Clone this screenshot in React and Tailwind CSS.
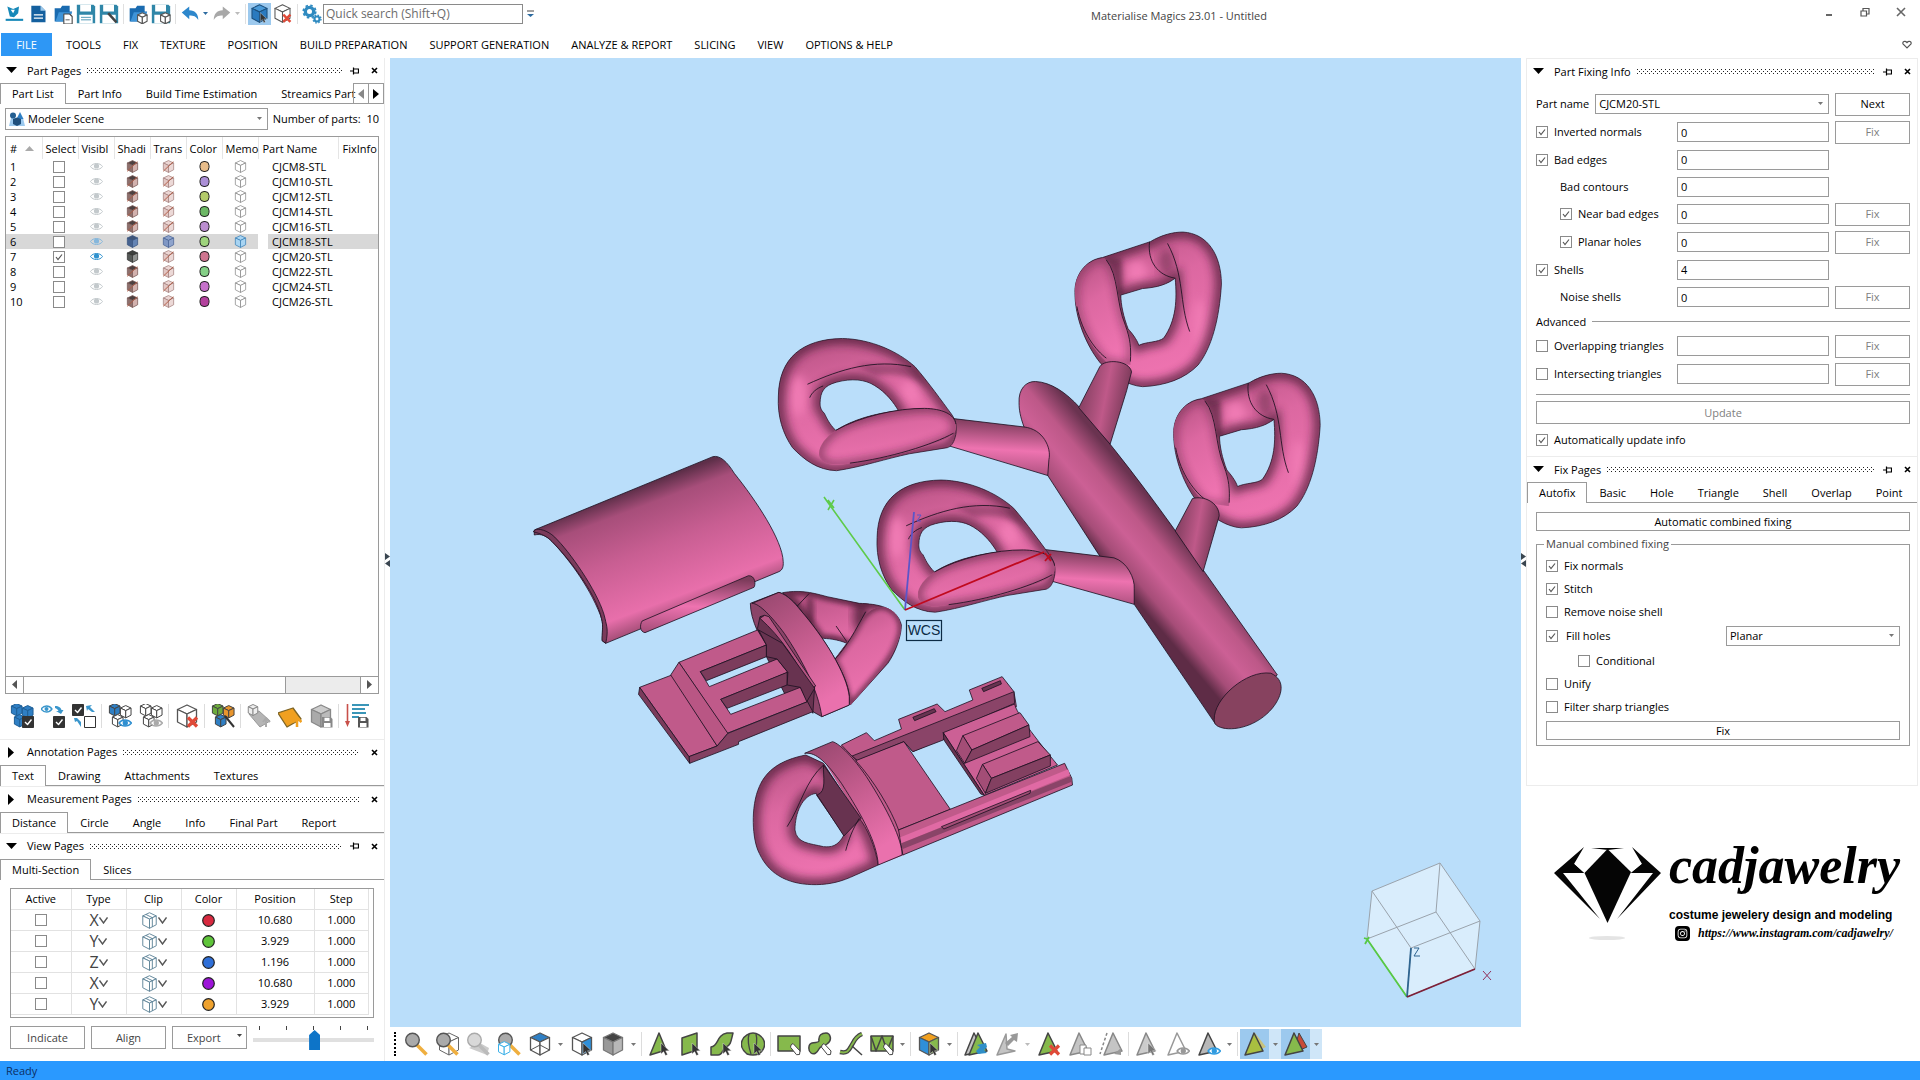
import { useId, useState } from 'react';
import { FaInstagram } from 'react-icons/fa';

const PARTS = [
  { id: 1, name: 'CJCM8-STL', color: '#e8bd8a' },
  { id: 2, name: 'CJCM10-STL', color: '#ab8fd6' },
  { id: 3, name: 'CJCM12-STL', color: '#b3cb6a' },
  { id: 4, name: 'CJCM14-STL', color: '#6cb865' },
  { id: 5, name: 'CJCM16-STL', color: '#bb8ed0' },
  { id: 6, name: 'CJCM18-STL', color: '#9ed47c', current: true },
  { id: 7, name: 'CJCM20-STL', color: '#cf7590', selected: true },
  { id: 8, name: 'CJCM22-STL', color: '#84cf86' },
  { id: 9, name: 'CJCM24-STL', color: '#c671cb' },
  { id: 10, name: 'CJCM26-STL', color: '#b3419d' },
];

const SECTIONS = [
  { axis: 'X', color: '#d8293f', position: '10.680' },
  { axis: 'Y', color: '#5fc53a', position: '3.929' },
  { axis: 'Z', color: '#2f6fd8', position: '1.196' },
  { axis: 'X', color: '#9d14d8', position: '10.680' },
  { axis: 'Y', color: '#efa22e', position: '3.929' },
];

const MENU = [
  'TOOLS',
  'FIX',
  'TEXTURE',
  'POSITION',
  'BUILD PREPARATION',
  'SUPPORT GENERATION',
  'ANALYZE & REPORT',
  'SLICING',
  'VIEW',
  'OPTIONS & HELP',
];

// ---------- small shared controls ----------

function Check({ label, defaultChecked, gap = 'gap-1.5' }) {
  return (
    <label className={`flex items-center ${gap} whitespace-nowrap`}>
      <CheckBox defaultChecked={defaultChecked} />
      {label}
    </label>
  );
}

function CheckBox({ defaultChecked, name }) {
  return (
    <span className="relative inline-block h-3 w-3 shrink-0">
      <input
        type="checkbox"
        aria-label={name}
        defaultChecked={defaultChecked}
        className="peer block h-3 w-3 appearance-none border border-[#8a8a8a] bg-white"
      />
      <svg viewBox="0 0 12 12" className="pointer-events-none absolute inset-0 hidden h-3 w-3 peer-checked:block">
        <path d="M3 6l2 2.5L9 3.5" fill="none" stroke="#555" strokeWidth="1.2" />
      </svg>
    </span>
  );
}

function Select({ id, name, options, className, inner = 'pl-1' }) {
  return (
    <div className={`relative ${className}`}>
      <select
        id={id}
        aria-label={name}
        className={`h-full w-full appearance-none border border-[#9a9a9a] bg-white ${inner}`}
      >
        {options.map((o) => (
          <option key={o}>{o}</option>
        ))}
      </select>
      <Caret className="pointer-events-none absolute top-1/2 right-1.5 -mt-0.5" />
    </div>
  );
}

function Caret({ className = '', fill = '#777' }) {
  return (
    <svg width="5" height="3" viewBox="0 0 5 3" className={className}>
      <path d="M0 0h5L2.5 3z" fill={fill} />
    </svg>
  );
}

function Button({ children, className = '', disabled }) {
  return (
    <button
      type="button"
      disabled={disabled}
      className={`border border-[#9a9a9a] bg-white text-center disabled:text-[#808080] ${className}`}
    >
      {children}
    </button>
  );
}

function PanelHeader({ title, open, pin }) {
  return (
    <div className="flex h-[25px] items-center pr-1.5 pl-1.5">
      <svg width="11" height="11" viewBox="0 0 11 11" className="mr-2.5 shrink-0">
        <path d={open ? 'M0 2h11L5.5 8z' : 'M2 0v11l6-5.5z'} fill="#000" />
      </svg>
      <h2 className="mr-1.5 whitespace-nowrap">{title}</h2>
      <div className="h-[5px] flex-1 bg-[radial-gradient(circle_at_0.5px_0.5px,#222_0.6px,transparent_0.7px),radial-gradient(circle_at_2.5px_2.5px,#222_0.6px,transparent_0.7px)] bg-[length:4px_4px]" />
      {pin && (
        <button type="button" aria-label="Pin" className="ml-2">
          <svg width="9" height="8" viewBox="0 0 9 8">
            <path d="M0 4h3M3.500 .5v7M3.500 2h5v4h-5" fill="none" stroke="#000" strokeWidth="1.200" />
          </svg>
        </button>
      )}
      <button type="button" aria-label="Close" className="ml-3">
        <svg width="7" height="7" viewBox="0 0 7 7">
          <path d="M1 1l5 5M6 1L1 6" stroke="#000" strokeWidth="1.600" />
        </svg>
      </button>
    </div>
  );
}

function Tabs({ items, children }) {
  const [active, setActive] = useState(0);
  return (
    <div className="flex h-[21px]">
      <div className="flex min-w-0 flex-1">
        {items.map((t, i) => (
          <button
            key={t}
            type="button"
            onClick={() => setActive(i)}
            className={
              i === active
                ? 'border border-b-0 border-[#9a9a9a] px-[11px] whitespace-nowrap'
                : 'border-b border-[#9a9a9a] px-3 pt-0.5 whitespace-nowrap last:pr-0'
            }
          >
            {t}
          </button>
        ))}
        <span className="min-w-0 flex-1 border-b border-[#9a9a9a]" />
      </div>
      {children}
    </div>
  );
}

// ---------- icons ----------

function Svg({ children, size = 24, className = '' }) {
  return (
    <svg width={size} height={size} viewBox="0 0 24 24" className={className} strokeLinejoin="round">
      {children}
    </svg>
  );
}

function CubeShape({ top = '#fff', left = '#fff', right = '#fff', stroke = '#555', x = 0, y = 0, s = 1, sw = 1.3 }) {
  return (
    <g transform={`translate(${x} ${y}) scale(${s})`} stroke={stroke} strokeWidth={sw / s}>
      <path d="M12 1l9.500 4.500L12 10 2.500 5.500z" fill={top} />
      <path d="M2.500 5.500L12 10v13l-9.500-5z" fill={left} />
      <path d="M21.500 5.500L12 10v13l9.500-5z" fill={right} />
    </g>
  );
}

const Cursor = ({ fill = '#333' }) => (
  <path d="M13 11v11l2.600-2.400 1.900 4 2-1-1.900-3.800h3.700z" fill={fill} stroke="#eee" strokeWidth=".4" />
);
const RedX = () => <path d="M13 13.500l9 9M22 13.500l-9 9" stroke="#e04a38" strokeWidth="3.200" fill="none" />;
const EyeMark = ({ color = '#2f8fd0' }) => (
  <g fill="none" stroke={color} strokeWidth="1.300">
    <path d="M11 19c3-4 9-4 12.500 0-3.500 4-9.500 4-12.500 0z" fill="#fff" />
    <circle cx="17.300" cy="19" r="2" fill={color} />
  </g>
);
const Disk = ({ x = 13, y = 13, s = 1, color = '#555' }) => (
  <g transform={`translate(${x} ${y}) scale(${s})`}>
    <path d="M0 0h8.500L10.500 2v8.500H0z" fill={color} />
    <path d="M2.500 .8h5v3.200h-5zM2 6h6.500v4H2z" fill="#fff" />
  </g>
);
const CheckMark = ({ x = 12, y = 12, on = true }) => (
  <g transform={`translate(${x} ${y})`}>
    <rect x=".5" y=".5" width="11" height="11" fill={on ? '#333' : '#fff'} stroke="#333" />
    {on && <path d="M3 6l2.500 2.500L9.500 3.500" stroke="#fff" strokeWidth="1.400" fill="none" />}
  </g>
);
const Lens = ({ fill = '#aaa', stroke = '#555', handle = '#efaf3f' }) => (
  <g>
    <path d="M13 13l9.500 9.500" stroke={handle} strokeWidth="3.600" />
    <circle cx="8.500" cy="8" r="6.800" fill={fill} stroke={stroke} strokeWidth="1.400" />
  </g>
);
const Tri = ({ fill = '#86b94c', stroke = '#444', x = 0 }) => (
  <path d="M11 1L2 23l18-4z" fill={fill} stroke={stroke} strokeWidth="1.500" transform={`translate(${x} 0)`} />
);
const Pencil = () => (
  <path d="M14 13l2-1.500 7 7.500-.5 3.500-3 .2-6-7.500z" fill="#fff" stroke="#444" strokeWidth="1" />
);

const TOP_ICONS = {
  logo: (
    <Svg size={20}>
      <path d="M4 3l7 3 7-3-1 8-5 5-5-1z" fill="#1688b8" />
      <path d="M8 7h5l-2 4z" fill="#fff" />
      <path d="M2 19h21" stroke="#1688b8" strokeWidth="2.500" fill="none" />
    </Svg>
  ),
  doc: (
    <Svg size={20}>
      <path d="M4 2h11l6 6v14H4z" fill="#14609f" />
      <path d="M15 2v6h6z" fill="#9cc8ea" />
      <path d="M7 13h11M7 17h11" stroke="#fff" strokeWidth="1.500" />
    </Svg>
  ),
  open: (
    <Svg size={20}>
      <path d="M2 5h7l2-3h9v7h3l-5 12H2z" fill="#1a6bb0" />
      <path d="M7 10h16l-5 11H3z" fill="#3f94d8" />
      <path d="M13 12h7l3 3v9H13z" fill="#fff" stroke="#444" strokeWidth="1.300" />
      <path d="M15 19h5" stroke="#444" />
    </Svg>
  ),
  save: (
    <Svg size={20}>
      <path d="M1 1h20l2 2v20H1z" fill="#2f86a8" />
      <path d="M5 1h13v8H5zM4 13h16v10H4z" fill="#fff" />
      <path d="M6 16h12M6 19h12" stroke="#2f86a8" />
    </Svg>
  ),
  saveAs: (
    <Svg size={20}>
      <path d="M1 1h20l2 2v20H1z" fill="#2f86a8" />
      <path d="M5 1h13v8H5zM4 13h16v10H4z" fill="#fff" />
      <path d="M11 11l10 11" stroke="#444" strokeWidth="3" />
    </Svg>
  ),
  importPart: (
    <Svg size={20}>
      <path d="M2 5h7l2-3h9v7h3l-5 12H2z" fill="#1a6bb0" />
      <path d="M7 10h16l-5 11H3z" fill="#3f94d8" />
      <CubeShape x={10} y={10} s={0.6} />
    </Svg>
  ),
  savePart: (
    <Svg size={20}>
      <path d="M1 1h20l2 2v20H1z" fill="#2f86a8" />
      <path d="M5 1h13v8H5zM4 13h16v10H4z" fill="#fff" />
      <CubeShape x={10} y={10} s={0.6} />
    </Svg>
  ),
  undo: (
    <Svg size={18}>
      <path d="M1 10l10-8v5c8 0 12 5 12 13-3-5-6-6-12-6v5z" fill="#2d87cc" />
    </Svg>
  ),
  redo: (
    <Svg size={18}>
      <path d="M23 10L13 2v5C5 7 1 12 1 20c3-5 6-6 12-6v5z" fill="#a8a8a8" />
    </Svg>
  ),
  cube: (
    <Svg size={19}>
      <CubeShape top="#4a9ad8" left="#2a7abf" right="#2a7abf" stroke="#1b4f7c" />
      <Cursor />
    </Svg>
  ),
  cubeX: (
    <Svg size={19}>
      <CubeShape />
      <RedX />
    </Svg>
  ),
  gears: (
    <Svg size={20}>
      <circle cx="9" cy="9" r="5" fill="none" stroke="#2f8ac0" strokeWidth="4" />
      <circle cx="9" cy="9" r="7.500" fill="none" stroke="#2f8ac0" strokeWidth="2" strokeDasharray="3 2.900" />
      <circle cx="18" cy="18" r="3" fill="none" stroke="#2f8ac0" strokeWidth="2.500" />
      <circle cx="18" cy="18" r="4.800" fill="none" stroke="#2f8ac0" strokeWidth="1.500" strokeDasharray="2 1.770" />
    </Svg>
  ),
};

function Three({ a, b, c, stroke = '#444' }) {
  return (
    <g>
      <CubeShape s={0.56} x={0} y={-1} top={a} left={a} right={a} stroke={stroke} sw={1} />
      <CubeShape s={0.56} x={11} y={1} top={b} left={b} right={b} stroke={stroke} sw={1} />
      <CubeShape s={0.56} x={3} y={10} top={c} left={c} right={c} stroke={stroke} sw={1} />
    </g>
  );
}

const PART_TOOLS = [
  ['Select all', <><Three a="#2f7fc4" b="#2f7fc4" c="#2f7fc4" stroke="#1f5f96" /><CheckMark /></>],
  ['Select visible', <>
    <path d="M0 5c3-4 8-4 11 0-3 4-8 4-11 0z" fill="none" stroke="#3a96cc" strokeWidth="1.300" />
    <circle cx="5.500" cy="5" r="2" fill="#3a96cc" />
    <path d="M14 2c4 0 6 2 6.500 4h2L20 10l-5-3h2.500c-.5-1.500-2-2.500-3.500-3z" fill="#3a96cc" />
    <CheckMark />
  </>],
  ['Invert selection', <>
    <CheckMark x={0} y={0} />
    <CheckMark on={false} />
    <path d="M14 2l6-1-2 2 5 5-3 0-4-3-1 2zM2 14l1 4 2-1 4 6v-5l-4-4-3 0z" fill="#3a96cc" />
  </>],
  null,
  ['Show selected', <><Three a="#2f7fc4" b="#fff" c="#fff" /><EyeMark /></>],
  ['Hide selected', <><Three a="#fff" b="#fff" c="#fff" /><EyeMark color="#aaa" /></>],
  null,
  ['Unload', <><CubeShape /><RedX /></>],
  null,
  ['Color parts', <><Three a="#6cab3c" b="#e8952d" c="#2f7fc4" /><path d="M14 12l9 11" stroke="#333" strokeWidth="2" /></>],
  null,
  ['Move to scene', <>
    <path d="M2 10l10-3 11 10-10 6z" fill="#b5b5b5" stroke="#999" />
    <CubeShape s={0.5} top="#eee" left="#eee" right="#eee" stroke="#888" sw={1} />
    <path d="M19 15v8M16 18l3-4 4 4" stroke="#aaa" strokeWidth="2" fill="none" />
  </>],
  ['Platform', <>
    <path d="M0 9l15-5 8 11-14 8z" fill="#f0a020" stroke="#7d6424" strokeWidth="1.300" />
    <path d="M19 14v9M15 18l4.500-4 4 4" stroke="#f0a020" strokeWidth="2.500" fill="none" />
  </>],
  ['Save platform', <><CubeShape top="#ccc" left="#aaa" right="#bbb" stroke="#888" /><Disk color="#888" /></>],
  null,
  ['Sort', <>
    <path d="M2.500 0v18" stroke="#c8504a" strokeWidth="1.600" />
    <path d="M0 17h5l-2.500 6z" fill="#c8504a" />
    <path d="M7 1h17M7 5h13M7 9h14M7 13h7" stroke="#3a96b8" strokeWidth="1.800" />
    <Disk />
  </>],
];

const VIEW_TOOLS = [
  ['Zoom', <Lens />],
  ['Zoom part', <><CubeShape sw={1} x={2} stroke="#666" /><Lens /></>],
  ['Unzoom', <><path d="M3 16l18 7 2-7-9-5z" fill="#ccc" /><Lens fill="#d8d8d8" stroke="#aaa" handle="#bbb" /></>],
  ['Zoom all', <><Lens /><CubeShape s={0.6} x={0} y={9} stroke="#3ab0e8" sw={1} /></>],
  ['Standard views', <>
    <CubeShape top="#2f7fc4" />
    <path d="M2.500 18l9.500-5 9.500 5" fill="none" stroke="#555" />
  </>],
  'caret',
  ['Look at plane', <><CubeShape right="#2f8fd8" /><Cursor /></>],
  ['Shading', <CubeShape top="#444" left="#999" right="#b8b8b8" stroke="#777" />],
  'caret',
  null,
  ['Mark triangle', <><path d="M11 1L2 23l16-5z" fill="#86b94c" stroke="#444" strokeWidth="1.500" /><Cursor /></>],
  ['Mark plane', <><path d="M3 6l15-5v17L3 23z" fill="#86b94c" stroke="#444" strokeWidth="1.500" /><Cursor /></>],
  ['Mark surface', <><path d="M1 15c8-1 5-12 16-14h6c-2 8-2 12-7 14-4 2-3 8-8 8H1z" fill="#86b94c" stroke="#444" strokeWidth="1.500" /><Cursor /></>],
  ['Mark shell', <><path d="M6 22C-6 12 4 1 12 1s18 11 6 21q-6 2-12 0z" fill="#86b94c" stroke="#444" strokeWidth="1.500" /><path d="M8 2c-2 7 0 14 2 20M15 2c2 7 0 14-2 20" stroke="#444" fill="none" strokeWidth="1.300" /><Cursor /></>],
  null,
  ['Rectangle mark', <><rect x="1" y="4" width="22" height="15" fill="#86b94c" stroke="#444" strokeWidth="1.500" /><Pencil /></>],
  ['Free mark', <><path d="M11 9C10 3 14 1 18 1s7 7 1 11-6 1-8 5-5 6-8 4-3-9 1-10 6 0 7-2z" fill="#86b94c" stroke="#444" strokeWidth="1.500" /><Pencil /></>],
  ['Brush mark', <><path d="M1 20c9 2 9-3 13-9 2-4 4-7 9-9" fill="none" stroke="#444" strokeWidth="4.500" /><path d="M1 20c9 2 9-3 13-9 2-4 4-7 9-9" fill="none" stroke="#86b94c" strokeWidth="2" /><path d="M13 14l10 9" stroke="#444" strokeWidth="1.500" /></>],
  ['Window mark', <><rect x="1" y="4" width="22" height="15" fill="#86b94c" stroke="#444" strokeWidth="1.500" /><path d="M1 4l5 15 6-15 5 15 6-15" fill="none" stroke="#444" strokeWidth="1.500" /><Pencil /></>],
  'caret',
  null,
  ['Mark options', <><CubeShape top="#f0a020" left="#2f8fd8" right="#86b94c" /><Cursor /></>],
  'caret',
  null,
  ['Expand marked', <><Tri fill="#c4c4c4" x={-1} /><Tri x={3} /><path d="M14 22l9-1-3-3 3-3-1-4-9 2 3 2-4 4z" fill="#2f8fc8" /></>],
  ['Shrink marked', <><path d="M11 2L2 23l18-4-8-2z" fill="#c4c4c4" stroke="#999" strokeWidth="1.500" /><path d="M23 1l-1 9-3-2-6 6-3-3 7-6-2-2z" fill="#999" /></>],
  'caretDim',
  ['Delete marked', <><Tri /><RedX /></>],
  ['Copy marked', <><Tri fill="#c4c4c4" stroke="#888" /><rect x="12" y="13" width="6" height="9" fill="#fff" stroke="#888" /><rect x="16" y="16" width="7" height="7" fill="#fff" stroke="#888" /></>],
  ['Separate marked', <><path d="M8 1L1 22" stroke="#888" strokeWidth="1.500" strokeDasharray="3 2" /><Tri fill="#c4c4c4" stroke="#888" x={3} /><path d="M15 22l7-6v7z" fill="#999" /></>],
  null,
  ['Select triangles', <><Tri fill="#ccc" stroke="#888" /><Cursor fill="#777" /></>],
  ['Hide marked', <><Tri fill="#fff" stroke="#999" /><EyeMark color="#999" /></>],
  ['Show marked', <><Tri fill="#b8b8b8" stroke="#444" /><EyeMark color="#2f9be0" /></>],
  'caret',
  null,
  ['Mark visible', <><path d="M12 1l11 14-19 8" fill="#c8c27a" /><Tri fill="#a9bf40" /></>, true],
  'caretOn',
  ['Mark through', <><path d="M15 1l8 14-14 6z" fill="#c84a38" stroke="#444" /><Tri x={-1} /></>, true],
  'caretOn',
];

function ToolIcon({ item }) {
  if (item === null) return <span className="mx-0.5 h-6 w-px shrink-0 bg-[#dcdcdc]" />;
  if (item === 'caretOn') {
    return (
      <span className="flex h-[30px] w-3 shrink-0 items-center justify-center bg-[#cfe6f8]">
        <Caret />
      </span>
    );
  }
  if (typeof item === 'string') {
    return (
      <span className="flex w-[11px] shrink-0 justify-center">
        <Caret fill={item === 'caretDim' ? '#bbb' : '#777'} />
      </span>
    );
  }
  const [name, art, on] = item;
  return (
    <button
      type="button"
      aria-label={name}
      className={
        on
          ? 'flex h-[30px] w-[29px] shrink-0 items-center justify-center bg-[#9cc9ee]'
          : 'flex w-[31px] shrink-0 items-center justify-center'
      }
    >
      <Svg>{art}</Svg>
    </button>
  );
}

// ---------- top bars ----------

function TopButton({ icon, name, on, width = 'w-[23px]' }) {
  return (
    <button
      type="button"
      aria-label={name}
      className={`flex h-[22px] ${width} shrink-0 items-center justify-center ${on ? 'bg-[#9cc9ee]' : ''}`}
    >
      {TOP_ICONS[icon]}
    </button>
  );
}

const TopSep = () => (
  <span className="flex w-1.5 shrink-0 justify-center">
    <span className="h-5 w-px bg-[#e0e0e0]" />
  </span>
);

function TitleBar() {
  return (
    <header className="flex h-[27px] shrink-0 items-center pl-0.5">
      <TopButton icon="logo" name="Magics" />
      <TopButton icon="doc" name="New" width="w-[26px]" />
      <TopButton icon="open" name="Open" />
      <TopButton icon="save" name="Save" />
      <TopButton icon="saveAs" name="Save as" />
      <TopSep />
      <TopButton icon="importPart" name="Import part" />
      <TopButton icon="savePart" name="Save part" />
      <TopSep />
      <TopButton icon="undo" name="Undo" />
      <Caret className="mx-0.5" fill="#2d6ba0" />
      <TopButton icon="redo" name="Redo" />
      <Caret className="mx-0.5" fill="#bbb" />
      <TopSep />
      <TopButton icon="cube" name="Select parts" on />
      <TopButton icon="cubeX" name="Unload part" />
      <TopSep />
      <TopButton icon="gears" name="Settings" />
      <input
        type="search"
        aria-label="Quick search"
        placeholder="Quick search (Shift+Q)"
        className="h-5 w-[200px] shrink-0 border border-[#8a8a8a] px-0.5 text-[12px] placeholder:text-[#6d6d6d]"
      />
      <svg width="7" height="8" viewBox="0 0 7 8" className="ml-1 shrink-0">
        <path d="M0 1h7" stroke="#444" />
        <path d="M0 4h7L3.500 7z" fill="#2d6ba0" />
      </svg>
      <h1 className="flex-1 pt-1 text-center text-[#444]">Materialise Magics 23.01 - Untitled</h1>
      <div className="flex shrink-0 items-center gap-[26px] pr-3.5 pb-1">
        <button type="button" aria-label="Minimize">
          <svg width="10" height="10" viewBox="0 0 10 10"><path d="M2 8h6" stroke="#666" strokeWidth="2" /></svg>
        </button>
        <button type="button" aria-label="Restore">
          <svg width="10" height="10" viewBox="0 0 10 10"><path d="M1 4h5.500v5H1zM3 4V1.500h6V7H6.500" fill="none" stroke="#555" strokeWidth="1.200" /></svg>
        </button>
        <button type="button" aria-label="Close window">
          <svg width="10" height="10" viewBox="0 0 10 10"><path d="M1 1l8 8M9 1L1 9" stroke="#666" strokeWidth="1.600" /></svg>
        </button>
      </div>
    </header>
  );
}

function MenuBar() {
  return (
    <nav className="flex h-[31px] shrink-0 items-center pt-1 pl-px">
      <a href="#file" className="mr-[3px] flex h-[23px] w-[51px] items-center justify-center bg-[#2e97f5] text-white">
        FILE
      </a>
      {MENU.map((m) => (
        <a key={m} href="#menu" className="px-[11px] whitespace-nowrap">
          {m}
        </a>
      ))}
      <svg width="10" height="9" viewBox="0 0 10 9" className="mr-2 ml-auto">
        <path d="M5 7.800L1 3.800C.3 2 2.800 0 5 2.500 7.200 0 9.700 2 9 3.800z" fill="none" stroke="#555" strokeWidth="1.200" />
      </svg>
    </nav>
  );
}

// ---------- left side ----------

function RowCube({ top, left, right, stroke, slash }) {
  return (
    <svg width="13" height="13" viewBox="0 0 24 24" className="mx-auto">
      <CubeShape top={top} left={left} right={right} stroke={stroke} sw={1.400} />
      {slash && <path d="M2 21L21 3" stroke="#b0573f" strokeWidth="1.600" />}
    </svg>
  );
}

function RowEye({ color }) {
  return (
    <svg width="13" height="9" viewBox="0 0 13 9" className="mx-auto">
      <path d="M.5 4.500C3 .5 10 .5 12.500 4.500 10 8.500 3 8.500 .5 4.500z" fill="none" stroke={color} />
      <circle cx="6.500" cy="4" r="2.600" fill={color} />
    </svg>
  );
}

function PartRow({ part }) {
  const cell = part.current ? 'bg-[#d8d8d8]' : '';
  let shade = ['#4c4040', '#8d706d', '#d3b2ae', '#7a5a57'];
  let trans = ['#ecd6d4', '#e2c6c3', '#ecd9d7', '#a58380'];
  let eye = '#c3c9cc';
  if (part.current) {
    shade = ['#3e5478', '#46628f', '#6585b5', '#3a5480'];
    trans = ['#8fa4cc', '#7f97c4', '#8fa4cc', '#4a6496'];
    eye = '#85b7dc';
  }
  if (part.selected) {
    shade = ['#3c3f3d', '#555957', '#909391', '#333'];
    eye = '#2f92cf';
  }
  return (
    <tr className="h-[15px]">
      <td className={`pl-1 ${cell}`}>{part.id}</td>
      <td className={cell}>
        <div className="flex pl-[11px]">
          <CheckBox name={`Select ${part.name}`} defaultChecked={part.selected} />
        </div>
      </td>
      <td className={cell}><RowEye color={eye} /></td>
      <td className={cell}><RowCube top={shade[0]} left={shade[1]} right={shade[2]} stroke={shade[3]} slash={!part.selected && !part.current} /></td>
      <td className={cell}><RowCube top={trans[0]} left={trans[1]} right={trans[2]} stroke={trans[3]} slash={!part.current} /></td>
      <td className={cell}>
        <svg width="11" height="11" viewBox="0 0 11 11" className="mx-auto">
          <rect x="1" y=".5" width="9" height="10" rx="4" fill={part.color} stroke="#222" />
        </svg>
      </td>
      <td className={cell}>
        {part.current ? (
          <RowCube top="#a8d4f2" left="#a8d4f2" right="#a8d4f2" stroke="#3b82b8" />
        ) : (
          <RowCube stroke="#8a8a8a" />
        )}
      </td>
      <td className="pl-2.5">
        <div className={`pl-1 ${part.current ? 'bg-[#d8d8d8]' : ''}`}>{part.name}</div>
      </td>
      <td className={cell} />
    </tr>
  );
}

const PART_COLUMNS = ['Select', 'Visibl', 'Shadi', 'Trans', 'Color', 'Memo'];

function PartList() {
  return (
    <div className="mx-[5px] mt-1.5 flex min-h-0 flex-1 flex-col border border-[#9a9a9a]">
      <div className="min-h-0 flex-1">
        <table className="w-full table-fixed border-collapse leading-[15px]">
          <colgroup>
            <col className="w-9" />
            <col className="w-9" />
            <col className="w-9" />
            <col className="w-9" />
            <col className="w-9" />
            <col className="w-9" />
            <col className="w-9" />
            <col className="w-20" />
            <col />
          </colgroup>
          <thead>
            <tr className="h-[22px] text-left">
              <th className="border-r border-[#e5e5e5] pl-1 font-normal">
                <span className="flex items-center gap-2">
                  #
                  <svg width="9" height="5" viewBox="0 0 9 5"><path d="M0 5h9L4.500 0z" fill="#aaa" /></svg>
                </span>
              </th>
              {PART_COLUMNS.map((c) => (
                <th key={c} className="border-r border-[#e5e5e5] pl-[3px] font-normal whitespace-nowrap">
                  {c}
                </th>
              ))}
              <th className="border-r border-[#e5e5e5] pl-1 font-normal">Part Name</th>
              <th className="pl-1 font-normal whitespace-nowrap">FixInfo</th>
            </tr>
          </thead>
          <tbody>
            {PARTS.map((p) => (
              <PartRow key={p.id} part={p} />
            ))}
          </tbody>
        </table>
      </div>
      <div className="flex h-[17px] shrink-0 border-t border-[#9a9a9a] bg-[#ececec]">
        <button type="button" aria-label="Scroll left" className="flex w-[18px] items-center justify-center border-r border-[#9a9a9a] bg-white">
          <svg width="5" height="9" viewBox="0 0 5 9"><path d="M5 0v9L0 4.500z" fill="#555" /></svg>
        </button>
        <div className="flex-1">
          <div className="h-full w-[78%] border-r border-[#9a9a9a] bg-white" />
        </div>
        <button type="button" aria-label="Scroll right" className="flex w-[18px] items-center justify-center border-l border-[#9a9a9a] bg-white">
          <svg width="5" height="9" viewBox="0 0 5 9"><path d="M0 0v9l5-4.500z" fill="#555" /></svg>
        </button>
      </div>
    </div>
  );
}

function MultiSection() {
  const line = 'border-r border-b border-[#e2e2e2]';
  return (
    <>
      <div className="mx-2.5 mt-2 border border-[#9a9a9a] pr-1 pb-0.5">
        <table className="w-full table-fixed border-collapse text-center">
          <colgroup>
            <col className="w-[60px]" />
            <col className="w-[55px]" />
            <col className="w-[55px]" />
            <col className="w-[55px]" />
            <col className="w-[78px]" />
            <col />
          </colgroup>
          <thead>
            <tr className="h-[21px]">
              {['Active', 'Type', 'Clip', 'Color', 'Position', 'Step'].map((h) => (
                <th key={h} className={`font-normal ${line}`}>{h}</th>
              ))}
            </tr>
          </thead>
          <tbody>
            {SECTIONS.map((s, i) => (
              <tr key={i} className="h-[21px]">
                <td className={line}>
                  <div className="flex justify-center"><CheckBox name={`Active ${i + 1}`} /></div>
                </td>
                <td className={line}>
                  <div className="flex h-5 items-center justify-center text-base leading-5 text-[#444]">
                    {s.axis}
                    <Chevron />
                  </div>
                </td>
                <td className={line}>
                  <div className="flex items-center justify-center">
                    <svg width="17" height="17" viewBox="0 0 24 24">
                      <CubeShape stroke="#5b8296" sw={1.300} />
                      <path d="M7 3.500l9 4.500v13" fill="none" stroke="#5b8296" strokeWidth="1.300" />
                    </svg>
                    <Chevron />
                  </div>
                </td>
                <td className={line}>
                  <svg width="13" height="13" viewBox="0 0 13 13" className="mx-auto">
                    <circle cx="6.500" cy="6.500" r="5.800" fill={s.color} stroke="#222" strokeWidth="1.200" />
                  </svg>
                </td>
                <td className={line}>{s.position}</td>
                <td className={line}>1.000</td>
              </tr>
            ))}
          </tbody>
        </table>
      </div>
      <div className="mx-2.5 mt-2 mb-[11px] flex items-start gap-1.5 text-[#444]">
        <Button className="h-[23px] w-[75px]">Indicate</Button>
        <Button className="h-[23px] w-[75px]">Align</Button>
        <Button className="flex h-[23px] w-[75px] items-center justify-between pr-1 pl-3.5">
          Export
          <Caret fill="#444" className="mb-1" />
        </Button>
        <div className="flex-1">
          <div className="flex h-1 justify-between px-1.5">
            {[0, 1, 2, 3, 4].map((t) => (
              <span key={t} className="h-1 w-px bg-[#444]" />
            ))}
          </div>
          <input
            type="range"
            aria-label="Section position"
            defaultValue="51"
            className="block h-5 w-full appearance-none bg-transparent [&::-webkit-slider-runnable-track]:h-1 [&::-webkit-slider-runnable-track]:bg-[#e0e0e0] [&::-webkit-slider-thumb]:-mt-2 [&::-webkit-slider-thumb]:h-5 [&::-webkit-slider-thumb]:w-[11px] [&::-webkit-slider-thumb]:appearance-none [&::-webkit-slider-thumb]:bg-[#0d74c8] [&::-webkit-slider-thumb]:[clip-path:polygon(50%_0,100%_25%,100%_100%,0_100%,0_25%)]"
          />
        </div>
      </div>
    </>
  );
}

function Chevron() {
  return (
    <svg width="9" height="7" viewBox="0 0 9 7">
      <path d="M.5 .5l4 5.500 4-5.500" fill="none" stroke="#555" strokeWidth="1.400" />
    </svg>
  );
}

function LeftPanel() {
  return (
    <aside className="flex w-[385px] shrink-0 flex-col border-r border-[#ececec]">
      <PanelHeader title="Part Pages" open pin />
      <Tabs items={['Part List', 'Part Info', 'Build Time Estimation', 'Streamics Part']}>
        <div className="flex shrink-0">
          <button type="button" aria-label="Previous tabs" className="flex w-4 items-center justify-center border border-[#9a9a9a]">
            <svg width="6" height="10" viewBox="0 0 6 10"><path d="M6 0v10L0 5z" fill="#888" /></svg>
          </button>
          <button type="button" aria-label="Next tabs" className="flex w-[15px] items-center justify-center border border-l-0 border-[#9a9a9a]">
            <svg width="6" height="10" viewBox="0 0 6 10"><path d="M0 0v10l6-5z" fill="#000" /></svg>
          </button>
        </div>
      </Tabs>
      <div className="mx-[5px] mt-1 flex items-center justify-between">
        <div className="relative">
          <Select name="Scene" options={['Modeler Scene']} className="h-[22px] w-[263px]" inner="pl-[22px]" />
          <svg width="16" height="14" viewBox="0 0 16 14" className="pointer-events-none absolute top-1 left-1">
            <path d="M2 6l-2 8h16l-2-8z" fill="#9cc9ee" />
            <circle cx="4" cy="3.500" r="3" fill="#245f92" />
            <path d="M11 0l3.500 7h-7z" fill="#2f7fc4" />
            <path d="M4 7l4-1.500L12 7v5l-4 2-4-2z" fill="#1f4f7c" />
          </svg>
        </div>
        <p className="whitespace-pre">Number of parts:  10</p>
      </div>
      <PartList />
      <div className="flex h-[45px] shrink-0 items-center pl-1.5">
        {PART_TOOLS.map((t, i) => (
          <ToolIcon key={i} item={t} />
        ))}
      </div>
      <section className="h-[47px] shrink-0 border-t border-[#ececec]">
        <PanelHeader title="Annotation Pages" />
        <Tabs items={['Text', 'Drawing', 'Attachments', 'Textures']} />
      </section>
      <section className="h-[47px] shrink-0 border-t border-[#ececec]">
        <PanelHeader title="Measurement Pages" />
        <Tabs items={['Distance', 'Circle', 'Angle', 'Info', 'Final Part', 'Report']} />
      </section>
      <section className="shrink-0 border-t border-[#ececec]">
        <PanelHeader title="View Pages" open pin />
        <Tabs items={['Multi-Section', 'Slices']} />
        <MultiSection />
      </section>
    </aside>
  );
}

// ---------- 3D scene ----------

const EDGE = '#4a1f36';
const INK = '#1c1020';

// filled outline with soft darkening along its rim, like a lit tube
function Solid({ d, fill = 'url(#pink)', rim = 34, blur = 'soft', ink = true, children }) {
  const id = useId();
  return (
    <g>
      <clipPath id={id}>
        <path d={d} clipRule="evenodd" />
      </clipPath>
      <path d={d} fill={fill} fillRule="evenodd" />
      <g clipPath={`url(#${id})`}>
        {children}
        <path d={d} fill="none" stroke={EDGE} strokeWidth={rim} filter={`url(#${blur})`} opacity=".7" />
      </g>
      {ink && <path d={d} fill="none" stroke={INK} strokeWidth="1" vectorEffect="non-scaling-stroke" opacity=".7" />}
    </g>
  );
}

function Flat({ d, fill = '#c05a8a' }) {
  return <path d={d} fill={fill} stroke={INK} strokeWidth="1" strokeOpacity=".8" vectorEffect="non-scaling-stroke" strokeLinejoin="round" />;
}

function Lines({ d }) {
  return <path d={d} fill="none" stroke={INK} strokeWidth="1" strokeOpacity=".85" vectorEffect="non-scaling-stroke" />;
}

function LoopLeft() {
  return (
    <g>
      <Solid d="M48 540C50 430 110 375 215 373C290 375 360 410 405 455C440 500 475 555 500 592C515 615 515 640 510 660C505 680 498 687 490 690L390 708C330 722 270 745 200 757C150 755 115 725 85 690C60 650 45 600 48 540ZM157 560C158 530 165 510 200 500C240 488 275 492 300 510C330 530 350 560 362 583C300 590 240 610 198 640C180 620 175 605 168 590C158 580 157 570 157 560Z">
        <ellipse cx="395" cy="530" rx="28" ry="36" fill="#f07ab4" filter="url(#soft)" />
        <ellipse cx="100" cy="540" rx="22" ry="60" fill="#f07ab4" filter="url(#soft)" />
        <path d="M250 450Q330 440 410 460L440 520Q400 470 300 480z" fill={EDGE} opacity=".35" filter="url(#tight)" />
      </Solid>
      <Solid
        d="M155 715C150 690 170 660 198 640C260 600 360 575 430 576C475 577 508 592 512 622C514 645 505 658 480 668C410 700 320 722 235 735C200 742 165 745 155 715Z"
        rim={16}
        ink={false}
      />
      <Lines d="M198 640C260 600 360 575 430 576C475 577 508 592 512 622M235 735C340 720 450 682 506 648M124 506C210 462 300 432 395 455M130 545C135 530 148 518 165 511" />
    </g>
  );
}

function LoopRight() {
  return (
    <g>
      <Solid d="M823 240C822 190 850 145 895 138L1020 92C1050 72 1080 64 1105 64C1170 68 1205 130 1206 215C1200 320 1180 400 1145 450C1110 490 1060 510 1000 513C960 510 920 480 890 445C850 390 823 310 823 240ZM943 247L1000 228C1040 225 1065 215 1085 198C1090 260 1088 320 1055 372C1040 385 1010 382 990 393C985 375 970 355 962 345C950 310 943 275 943 247Z">
        <ellipse cx="985" cy="180" rx="28" ry="34" fill="#f07ab4" filter="url(#soft)" />
        <ellipse cx="1062" cy="150" rx="20" ry="40" fill={EDGE} filter="url(#soft)" opacity=".45" />
        <path d="M905 140L945 140L950 250L930 250z" fill={EDGE} filter="url(#tight)" opacity=".6" />
        <ellipse cx="1150" cy="330" rx="18" ry="70" fill="#f07ab4" filter="url(#soft)" />
      </Solid>
      <Solid
        d="M823 240C822 190 850 145 900 140C940 180 930 260 955 335C972 380 970 410 968 450L905 440C860 395 823 310 823 240Z"
        rim={12}
        ink={false}
      />
      <Lines d="M905 145C938 190 930 270 955 335C968 375 970 400 968 440M1018 92C1012 150 1040 190 1085 198M1065 97C1110 190 1095 270 1123 353M828 280C842 360 880 410 905 430" />
    </g>
  );
}

function Scene() {
  return (
    <svg viewBox="390 58 1131 969" preserveAspectRatio="xMidYMid slice" className="block h-full w-full bg-[#badefa]">
      <defs>
        <filter id="soft" x="-30%" y="-30%" width="160%" height="160%">
          <feGaussianBlur stdDeviation="13" />
        </filter>
        <filter id="tight" x="-30%" y="-30%" width="160%" height="160%">
          <feGaussianBlur stdDeviation="7" />
        </filter>
        <linearGradient id="pink" x1="0" y1="0" x2=".35" y2="1">
          <stop offset="0" stopColor="#b35080" />
          <stop offset=".45" stopColor="#dc68a1" />
          <stop offset="1" stopColor="#ee73b0" />
        </linearGradient>
        <linearGradient id="trunk" gradientUnits="userSpaceOnUse" x1="870" y1="985" x2="1035" y2="860">
          <stop offset="0" stopColor="#5e2c46" />
          <stop offset=".18" stopColor="#a64d78" />
          <stop offset=".45" stopColor="#cc6095" />
          <stop offset=".7" stopColor="#bd5888" />
          <stop offset="1" stopColor="#6a3350" />
        </linearGradient>
        <linearGradient id="stem" x1=".1" y1="0" x2="0" y2="1">
          <stop offset="0" stopColor="#7e3c5c" />
          <stop offset=".5" stopColor="#ee73b0" />
          <stop offset="1" stopColor="#a34c77" />
        </linearGradient>
        <linearGradient id="stemDark" x1="0" y1=".3" x2="1" y2=".6">
          <stop offset=".1" stopColor="#8a4265" />
          <stop offset=".5" stopColor="#bf5989" />
          <stop offset=".9" stopColor="#7a3a59" />
        </linearGradient>
        <linearGradient id="plate" gradientUnits="userSpaceOnUse" x1="300" y1="185" x2="450" y2="560">
          <stop offset="0" stopColor="#5e2f49" />
          <stop offset=".14" stopColor="#a74e7a" />
          <stop offset=".45" stopColor="#c85e92" />
          <stop offset=".85" stopColor="#e86fab" />
          <stop offset="1" stopColor="#a04c74" />
        </linearGradient>
        <linearGradient id="band" x1="0" y1="0" x2=".5" y2="1">
          <stop offset="0" stopColor="#94466c" />
          <stop offset=".5" stopColor="#c25b8c" />
          <stop offset="1" stopColor="#ea71ad" />
        </linearGradient>
      </defs>

      {/* tree with four loops */}
      <g transform="translate(760 210) scale(.38265 .34439)">
        <Flat d="M677 560C675 520 695 497 720 498C760 500 800 530 835 573C960 735 1060 890 1158 1045L1352 1350L1190 1492L978 1145L885 1000L752 771L690 630C680 600 677 580 677 560Z" fill="url(#trunk)" />
        <Flat d="M1187 1480C1185 1420 1270 1335 1335 1345C1375 1365 1365 1410 1340 1445C1300 1500 1235 1515 1203 1502C1190 1497 1187 1490 1187 1480Z" fill="#87425f" />
        <Flat d="M500 605L690 630C740 636 762 690 755 725L752 771L485 682Z" fill="url(#stem)" />
        <Flat d="M745 986L925 1010C960 1022 980 1070 978 1100L978 1145L760 1077Z" fill="url(#stem)" />
        <LoopLeft />
        <g transform="translate(258 411)">
          <LoopLeft />
        </g>
        <LoopRight />
        <g transform="translate(258 410)">
          <LoopRight />
        </g>
        <Flat d="M888 455C900 432 965 435 971 470L958 525L915 680L833 574Z" fill="url(#stemDark)" />
        <Flat d="M1130 838C1160 828 1200 850 1200 888L1158 1050L1085 932Z" fill="url(#stemDark)" />
      </g>

      {/* cover plate and both clasp halves */}
      <g transform="translate(520 430) scale(.35714 .33333)">
        <Flat d="M40 300L540 80C560 75 580 95 600 130C660 210 735 330 737 395C738 410 735 420 725 425L240 640L230 632C232 600 235 585 225 555C190 460 130 380 90 335C75 318 60 310 40 315Z" fill="url(#plate)" />
        <Flat d="M37 305C60 312 75 318 90 335C150 400 215 500 228 565C235 590 228 610 230 632L240 640C248 600 243 590 238 565C225 500 150 380 105 330C85 305 60 296 45 298Z" fill="#7a3b5b" />
        <Flat d="M342 573L640 437C660 437 660 465 655 472L350 608C335 605 335 585 342 573Z" fill="url(#stem)" />

        <Solid d="M735 488C780 480 810 485 860 500L950 520C1000 522 1055 530 1068 585C1068 620 1050 670 1030 700L925 825L880 690L915 640C890 628 860 625 843 625L775 525Z" rim={26} blur="tight">
          <ellipse cx="955" cy="560" rx="22" ry="50" fill={EDGE} filter="url(#soft)" opacity=".8" />
          <ellipse cx="812" cy="545" rx="12" ry="45" fill={EDGE} filter="url(#tight)" opacity=".6" />
        </Solid>
        <Solid d="M945 590C965 545 1000 520 1030 535C1060 550 1070 580 1065 610C1050 670 1030 700 925 825C915 780 895 710 880 690C900 660 925 630 945 590Z" rim={16} blur="tight" ink={false} />
        <Lines d="M968 545C940 600 915 650 880 690M775 530L810 490M885 588L915 635" />
        <Flat d="M645 520L725 487C750 495 770 520 785 540C850 620 920 740 922 800L922 825L845 860L820 845C760 760 645 620 645 520Z" fill="#8a4468" />
        <Flat d="M650 520L725 487C750 495 770 520 785 540C850 620 915 730 922 800L922 825L845 860C835 780 790 690 740 610C705 560 670 520 650 520Z" fill="url(#band)" />
        <Flat d="M665 595L672 560L685 556L825 770L820 850L803 815L745 800L690 680Z" fill="#683350" />
        <Flat d="M685 556L697 560L828 768L812 778C780 700 730 620 672 565Z" fill="#b55583" />
        <Flat d="M445 697L665 600L690 645L505 725L530 770L720 687L750 727L562 808L590 853L785 772L805 815L580 910Z" />
        <Flat d="M505 725L690 645L690 680L522 752Z" fill="#7c3c5c" />
        <Flat d="M562 808L748 727L748 765L580 835Z" fill="#7c3c5c" />
        <Flat d="M690 645L690 680L720 687L750 727L748 765L785 772L803 815L825 775L735 640L668 600Z" fill="#683350" />
        <Flat d="M335 772L425 735L552 948L473 980Z" />
        <Flat d="M445 697L582 910L552 948L422 735Z" fill="#b95684" />
        <Flat d="M582 910L805 815L820 845L612 935L612 943L475 1000L473 980L552 948Z" fill="#834061" />
        <Flat d="M335 772L473 980L475 1000L332 793Z" fill="#7a3b5b" />

        <path d="M855 1000L900 945L965 985L1075 1180L1075 1275L1003 1305L950 1165Z" fill="#c05a8a" />
        <Flat d="M900 945L970 908L992 932L1068 897L1060 868L1168 822L1190 845L1268 810L1258 780L1350 740L1383 785L1390 830L1185 925L1100 965L1075 935L940 990Z" />
        <Flat d="M930 978L1383 785L1385 820L1200 905L1185 930L1100 965L1075 935L945 992Z" fill="#8a4468" />
        <Flat d="M1100 862L1160 836L1165 845L1105 872ZM1293 775L1345 752L1348 762L1298 785Z" fill="#683350" />
        <Flat d="M940 992L1075 935L1205 1138L1060 1200C1040 1140 990 1050 940 992Z" />
        <Flat d="M1185 908L1385 822C1390 850 1440 920 1505 1005L1300 1096Z" fill="#cc6095" />
        <Flat d="M1185 908L1300 1096L1290 1092L1187 930Z" fill="#683350" />
        <Flat d="M1240 917L1400 848L1425 885L1265 960Z" />
        <Flat d="M1240 917L1265 960L1245 1000L1222 962Z" fill="#a34d76" />
        <Flat d="M1265 960L1425 885L1428 920L1245 1000Z" fill="#834061" />
        <Flat d="M1295 1003L1450 935L1485 975L1320 1045Z" />
        <Flat d="M1295 1003L1320 1045L1303 1090L1278 1045Z" fill="#a34d76" />
        <Flat d="M1320 1045L1485 975L1485 1008L1303 1090Z" fill="#834061" />
        <Flat d="M1060 1200L1525 1000L1545 1045L1547 1065L1072 1275Z" />
        <path d="M1065 1222L1535 1018L1540 1035L1068 1240Z" fill="#e06aa4" />
        <path d="M1068 1240L1542 1038L1545 1055L1070 1258Z" fill="#8a4468" />
        <Flat d="M1180 1190L1430 1081L1428 1090L1187 1197Z" fill="#a34d76" />

        <Solid d="M800 975C730 990 690 1020 670 1070C645 1130 650 1230 670 1270C700 1340 760 1365 830 1364C870 1363 900 1355 940 1335L1003 1305C995 1250 970 1190 950 1165L850 1000ZM830 1095L907 1215C890 1250 870 1252 850 1250C810 1240 775 1240 770 1200C770 1150 790 1095 830 1090Z" rim={38} />
        <Flat d="M850 1005L955 1165L907 1218L832 1095C860 1085 848 1040 850 1005Z" fill="#683350" />
        <Lines d="M850 1005C800 1050 785 1130 748 1190M950 1165C930 1200 920 1230 912 1262" />
        <Flat d="M797 970L875 935C895 940 935 985 970 1040C1030 1140 1070 1230 1070 1275L1003 1305C1000 1240 960 1160 900 1060C860 1000 830 965 797 970Z" fill="url(#band)" />
      </g>

      {/* work coordinate system */}
      <g fill="none">
        <path d="M905 610L824 497M828 500l6 8M834 500l-6 10" stroke="#5ecb4a" strokeWidth="1.600" />
        <path d="M905 610L914 512" stroke="#5b55c8" strokeWidth="1.800" />
        <path d="M905 610L1044 552M1045 553l6 8M1051 554l-6 7" stroke="#c00a1e" strokeWidth="1.800" />
        <path d="M917 515h4l-4 6h4" stroke="#5b55c8" />
        <rect x="906.500" y="620.500" width="35" height="20" fill="#badefa" stroke="#0c2a44" strokeWidth="1.200" />
      </g>
      <text x="924" y="635" textAnchor="middle" fontFamily="Liberation Sans" fontSize="14" fill="#0c2a44">WCS</text>

      {/* orientation cube */}
      <g stroke="#9aa3ac" fill="none">
        <path d="M1372 891L1440 863L1480 921L1475 969L1407 997L1367 939Z" fill="#fff" fillOpacity=".45" />
        <path d="M1372 891L1411 948L1480 921M1411 948L1407 997M1440 863L1436 912L1367 939M1436 912L1475 969" />
        <path d="M1407 997L1367 939l-3-1m1 6l4-7" stroke="#57c944" strokeWidth="1.800" />
        <path d="M1407 997L1411 948" stroke="#2f6590" strokeWidth="1.800" />
        <path d="M1407 997L1475 969" stroke="#7d2038" strokeWidth="1.800" />
        <path d="M1414 948h5l-5 8h6" stroke="#2f6590" />
        <path d="M1483 971l8 9M1491 971l-8 9" stroke="#93305a" />
      </g>
    </svg>
  );
}

// ---------- right side ----------

function FixRow({ label, value = '', checkable, defaultChecked, indent, fix, h = 'h-7' }) {
  const id = useId();
  return (
    <div className={`flex items-center gap-1.5 ${h}`}>
      <div className={`min-w-0 flex-1 ${indent ? 'pl-6' : ''}`}>
        {checkable ? <Check label={label} defaultChecked={defaultChecked} /> : <label htmlFor={id}>{label}</label>}
      </div>
      <input
        id={id}
        aria-label={label}
        defaultValue={value}
        className="h-5 w-[152px] border border-[#9a9a9a] px-[3px]"
      />
      {fix ? (
        <Button disabled className="h-[23px] w-[75px]">Fix</Button>
      ) : (
        <span className="w-[75px]" />
      )}
    </div>
  );
}

function FixingInfo() {
  return (
    <section className="h-[399px] border border-[#ececec]">
      <PanelHeader title="Part Fixing Info" open pin />
      <div className="pt-1.5 pr-[7px] pl-[9px]">
        <div className="flex h-7 items-center gap-1.5">
          <label htmlFor="part-name" className="whitespace-nowrap">Part name</label>
          <Select id="part-name" options={['CJCM20-STL']} className="h-5 flex-1" inner="pl-[3px]" />
          <Button className="h-[23px] w-[75px]">Next</Button>
        </div>
        <FixRow label="Inverted normals" value="0" checkable defaultChecked fix />
        <FixRow label="Bad edges" value="0" checkable defaultChecked h="h-[27px]" />
        <FixRow label="Bad contours" value="0" indent h="h-[27px]" />
        <FixRow label="Near bad edges" value="0" checkable defaultChecked indent fix />
        <FixRow label="Planar holes" value="0" checkable defaultChecked indent fix />
        <FixRow label="Shells" value="4" checkable defaultChecked h="h-[27px]" />
        <FixRow label="Noise shells" value="0" indent fix />
        <div className="flex h-[21px] items-center gap-1.5">
          Advanced
          <hr className="flex-1 border-[#9a9a9a]" />
        </div>
        <FixRow label="Overlapping triangles" checkable fix />
        <FixRow label="Intersecting triangles" checkable fix />
        <hr className="my-1.5 border-[#9a9a9a]" />
        <Button disabled className="h-[23px] w-full">Update</Button>
        <div className="mt-2">
          <Check label="Automatically update info" defaultChecked />
        </div>
      </div>
    </section>
  );
}

function FixPages() {
  return (
    <section className="h-[329px] border border-t-0 border-[#ececec]">
      <PanelHeader title="Fix Pages" open pin />
      <Tabs items={['Autofix', 'Basic', 'Hole', 'Triangle', 'Shell', 'Overlap', 'Point']} />
      <div className="pt-[9px] pr-[7px] pl-[9px]">
        <Button className="h-[19px] w-full leading-4">Automatic combined fixing</Button>
        <fieldset className="mt-[5px] border border-[#9a9a9a] px-[9px] pt-0.5 pb-[5px]">
          <legend className="-ml-0.5 px-0.5 text-[#444]">Manual combined fixing</legend>
          <div className="flex h-[23px] items-center"><Check label="Fix normals" defaultChecked /></div>
          <div className="flex h-[23px] items-center"><Check label="Stitch" defaultChecked /></div>
          <div className="flex h-[23px] items-center"><Check label="Remove noise shell" /></div>
          <div className="flex h-[26px] items-center justify-between">
            <Check label="Fill holes" defaultChecked gap="gap-2" />
            <Select name="Fill type" options={['Planar']} className="h-5 w-[174px]" inner="pl-[3px]" />
          </div>
          <div className="flex h-[23px] items-center pl-8"><Check label="Conditional" /></div>
          <div className="flex h-[23px] items-center"><Check label="Unify" /></div>
          <div className="flex h-[23px] items-center"><Check label="Filter sharp triangles" /></div>
          <Button className="mt-[3px] h-[19px] w-full leading-4">Fix</Button>
        </fieldset>
      </div>
    </section>
  );
}

function Brand() {
  return (
    <div className="mt-[46px] ml-7 flex items-start gap-2">
      <svg width="107" height="100" viewBox="0 0 107 100" className="mt-3 shrink-0">
        <path d="M53.500 5L77 28 53.500 79 30.500 29z" fill="#050505" />
        <path d="M37 4h33l-16 2z" fill="#050505" />
        <path d="M30 3L0 29l46 46L9 29h21L20 20z" fill="#050505" />
        <path d="M78 3l29 26-44 46 36-46H77l11-9z" fill="#050505" />
        <path d="M20 20l10 9H8z" fill="#050505" />
        <path d="M88 20l-11 9h22z" fill="#050505" />
        <ellipse cx="53" cy="94" rx="18" ry="2" fill="#e4e4e4" />
      </svg>
      <div className="text-black">
        <p className="font-['Liberation_Serif',serif] text-[52px] leading-[68px] font-bold italic">cadjawelry</p>
        <p className="mt-1.5 font-['Liberation_Sans',sans-serif] text-[12px] leading-[18px] font-bold whitespace-nowrap">
          costume jewelery design and modeling
        </p>
        <p className="flex items-center gap-2 pt-px pl-1.5 leading-4">
          <span className="flex h-[15px] w-[15px] items-center justify-center rounded bg-black text-white">
            <FaInstagram size={11} />
          </span>
          <a href="#instagram" className="font-['Liberation_Serif',serif] text-[12px] font-bold italic">
            https://www.instagram.com/cadjawelry/
          </a>
        </p>
      </div>
    </div>
  );
}

function Splitter({ className = '' }) {
  return (
    <div className={`flex w-[5px] shrink-0 items-center justify-center ${className}`}>
      <svg width="5" height="14" viewBox="0 0 5 14">
        <path d="M0 0l5 3.500L0 7zM5 7v7L0 10.500z" fill="#3a4650" />
      </svg>
    </div>
  );
}

export default function App() {
  return (
    <div className="flex h-screen flex-col overflow-hidden bg-white font-['Open_Sans','Noto_Sans',sans-serif] text-[11px] leading-4 text-black">
      <TitleBar />
      <MenuBar />
      <div className="flex min-h-0 flex-1">
        <LeftPanel />
        <Splitter />
        <div className="flex min-w-0 flex-1 flex-col">
          <div className="flex min-h-0 flex-1">
            <main className="min-w-0 flex-1">
              <Scene />
            </main>
            <Splitter className="pt-[34px]" />
            <aside className="w-[394px] shrink-0 pr-0.5">
              <FixingInfo />
              <FixPages />
              <Brand />
            </aside>
          </div>
          <div className="flex h-[34px] shrink-0 items-center">
            <span className="mr-1 ml-1 h-6 border-l-2 border-dotted border-black" />
            {VIEW_TOOLS.map((t, i) => (
              <ToolIcon key={i} item={t} />
            ))}
          </div>
        </div>
      </div>
      <footer className="h-[19px] shrink-0 bg-[#2a99ff] pl-1.5 leading-[19px] text-[#0b2f66]">Ready</footer>
    </div>
  );
}
